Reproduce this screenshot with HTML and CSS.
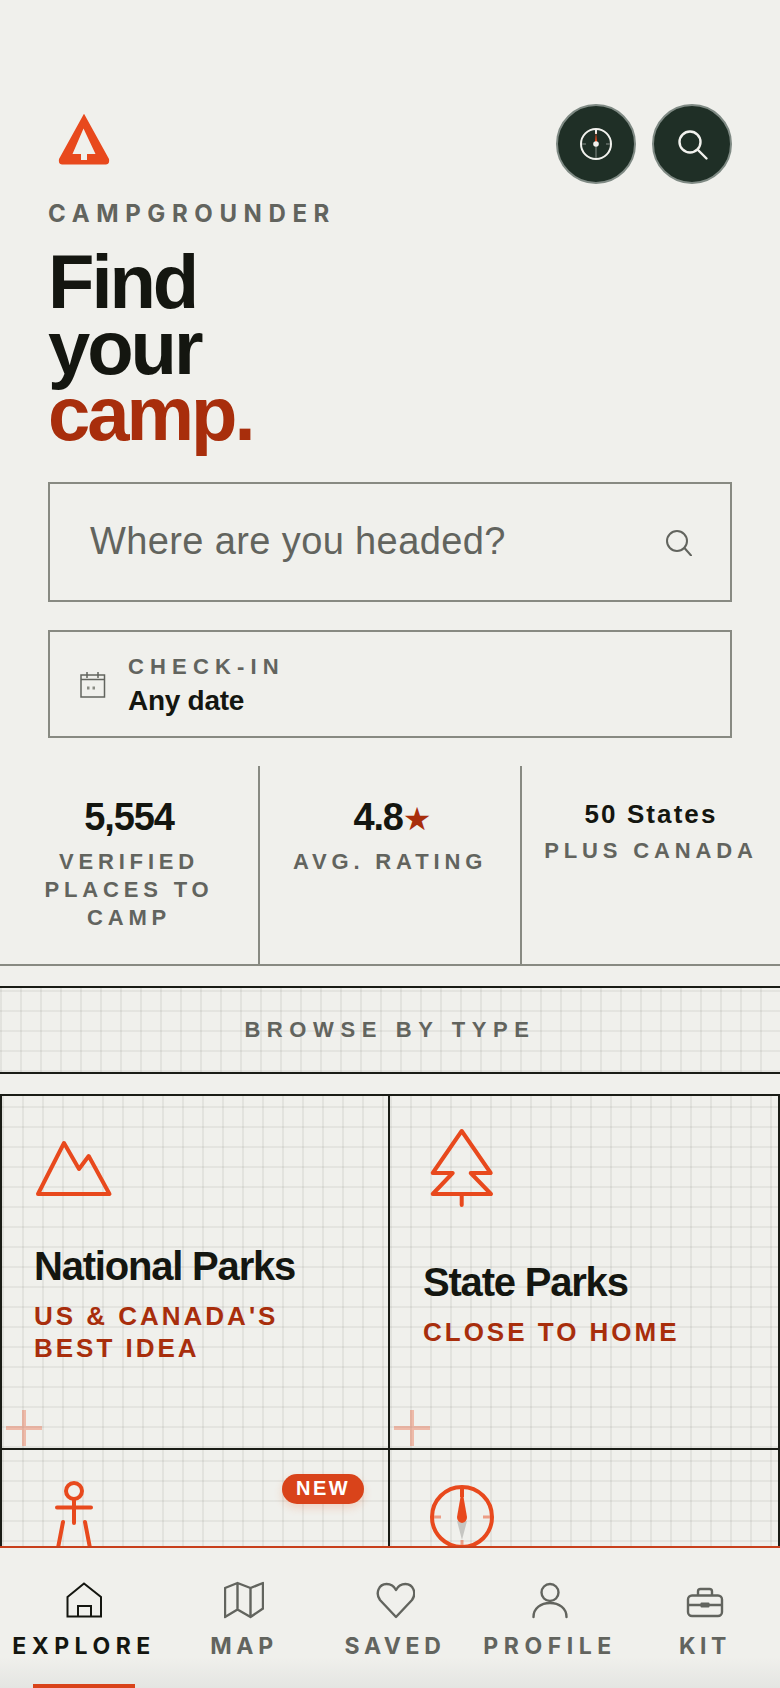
FILE: index.html
```html
<!DOCTYPE html>
<html lang="en">
<head>
<meta charset="utf-8">
<title>Campgrounder</title>
<link rel="stylesheet" href="styles.css">
</head>
<body>
<div class="app">
  <main class="main">
    <header class="hero">
      <div class="top-row">
        <svg class="logo" width="72" height="72" viewBox="0 0 72 72"><path class="logo-shape" fill-rule="evenodd" d="M36 6 Q36.500 6 37 7.500 L61 51 Q62 56 58 56.500 L14 56.500 Q10 56 11 51 L35 7.500 Q35.500 6 36 6 Z M35.500 20.500 L24.500 46 L33 46 L33 52 L39 52 L39 46 L47.500 46 Z"/></svg>
        <div class="round-btns">
          <button class="round-btn" aria-label="Compass">
            <svg width="40" height="40" viewBox="0 0 40 40" fill="none">
              <circle cx="20" cy="20" r="15" stroke="#f2f2ee" stroke-width="2"/>
              <path d="M20 5V10" stroke="#f2f2ee" stroke-width="2"/>
              <path d="M20 21V34M6 20H10M30 20H34" stroke="#66706a" stroke-width="1.500"/>
              <path d="M18.800 19 L20 8 L21.200 19 Z" fill="#e8491d"/>
              <circle cx="20" cy="20" r="2.800" fill="#f2f2ee"/>
            </svg>
          </button>
          <button class="round-btn" aria-label="Search">
            <svg width="40" height="40" viewBox="0 0 40 40" fill="none" stroke="#f2f2ee" stroke-width="2.400" stroke-linecap="round">
              <circle cx="18" cy="18" r="10.500"/>
              <path d="M26 26L34.500 34.500"/>
            </svg>
          </button>
        </div>
      </div>
      <div class="brand">CAMPGROUNDER</div>
      <h1 class="headline">Find<br>your<br><span class="accent">camp.</span></h1>
      <div class="search-box">
        <span class="placeholder">Where are you headed?</span>
        <svg width="28" height="28" viewBox="0 0 28 28" fill="none" stroke="#62645e" stroke-width="2" stroke-linecap="round">
          <circle cx="13" cy="13" r="10"/>
          <path d="M20.500 20L27 27.500"/>
        </svg>
      </div>
      <div class="date-box">
        <svg width="26" height="28" viewBox="0 0 26 28" fill="none" stroke="#62645e" stroke-width="1.500">
          <rect x="1" y="5" width="23.500" height="22"/>
          <path d="M1 9.500H24.500M7 2V8M18 2V8"/>
          <path d="M7 18H9.500M12.500 18H15" stroke="#8a8c84" stroke-width="3"/>
        </svg>
        <div class="date-text">
          <div class="date-label">CHECK-IN</div>
          <div class="date-value">Any date</div>
        </div>
      </div>
    </header>

    <section class="stats">
      <div class="stat">
        <div class="stat-value">5,554</div>
        <div class="stat-label">VERIFIED PLACES TO CAMP</div>
      </div>
      <div class="stat">
        <div class="stat-value stat-value-star">4.8<span class="star">★</span></div>
        <div class="stat-label">AVG. RATING</div>
      </div>
      <div class="stat">
        <div class="stat-value-small">50 States</div>
        <div class="stat-label stat-label-tight">PLUS CANADA</div>
      </div>
    </section>

    <div class="browse grid-bg">BROWSE BY TYPE</div>

    <section class="cards">
      <article class="card grid-bg">
        <svg class="card-icon" width="80" height="122" viewBox="0 0 80 122" fill="none" stroke="#e8491d" stroke-width="4" stroke-linecap="round" stroke-linejoin="round">
          <path d="M4 72 L30 21 L45 47 L54.700 34 L75.500 72 Z"/>
        </svg>
        <h2 class="card-title">National Parks</h2>
        <p class="card-sub">US &amp; CANADA'S BEST IDEA</p>
        <svg class="plus" width="36" height="36" viewBox="0 0 36 36"><path d="M0 18H36M18 0V36"/></svg>
      </article>
      <article class="card grid-bg">
        <svg class="card-icon" width="80" height="122" viewBox="0 0 80 122" fill="none" stroke="#e8491d" stroke-width="4" stroke-linecap="round" stroke-linejoin="round">
          <path d="M38.700 -7 L67.700 35 H47.700 L68 56 H9.700 L29.700 35 H9.700 Z M38.700 56 V67"/>
        </svg>
        <h2 class="card-title">State Parks</h2>
        <p class="card-sub">CLOSE TO HOME</p>
        <svg class="plus" width="36" height="36" viewBox="0 0 36 36"><path d="M0 18H36M18 0V36"/></svg>
      </article>
      <article class="card grid-bg">
        <span class="badge">NEW</span>
        <svg class="card-icon-low" width="80" height="120" viewBox="0 0 80 120" fill="none" stroke="#e8491d" stroke-width="4" stroke-linecap="round">
          <circle cx="40" cy="11" r="8"/>
          <path d="M40 19V43M23 27.500H57M29 42L24 68M51 42L56 68"/>
        </svg>
      </article>
      <article class="card grid-bg">
        <svg class="card-icon-low" width="80" height="120" viewBox="0 0 80 120" fill="none">
          <circle cx="40" cy="37" r="30" stroke="#e8491d" stroke-width="4"/>
          <path d="M40 7V17" stroke="#e8491d" stroke-width="4"/>
          <path d="M11 37H19M61 37H69M40 60V68" stroke="#e8491d" stroke-opacity="0.5" stroke-width="3"/>
          <path d="M35 41 L40 60 L45 41 Z" fill="#c6c6c2"/>
          <path d="M38.500 17 L41.500 17 L45 37 Q45 42 40 43 Q35 42 35 37 Z" fill="#e8491d"/>
        </svg>
      </article>
    </section>
  </main>

  <nav class="nav">
    <a class="nav-item nav-item-active">
      <svg width="40" height="40" viewBox="0 0 40 40" fill="none" stroke="#141610" stroke-width="2"><path d="M3.500 17 L20 3.500 L37 17 V36.500 H3.500 Z M14 36.500 V26 H27 V36.500"/></svg>
      <span class="nav-label nav-label-wide">EXPLORE</span>
      <span class="nav-bar"></span>
    </a>
    <a class="nav-item">
      <svg width="40" height="40" viewBox="0 0 40 40" fill="none" stroke="#62645e" stroke-width="2.400" stroke-linejoin="round"><path d="M1 8 L13.500 3 L26.500 8 L39 3 V28.500 L26.500 37 L13.500 29.500 L1 37 Z M13.500 3 V29.500 M26.500 8 V37"/></svg>
      <span class="nav-label">MAP</span>
    </a>
    <a class="nav-item">
      <svg width="40" height="40" viewBox="0 0 40 40" fill="none" stroke="#62645e" stroke-width="2.400" stroke-linejoin="round"><path d="M21 37 L5 20 C0 13 4 4 11.500 4 C16 4 19.500 7 21 10 C22.500 7 26 4 30.500 4 C38 4 42 13 37 20 Z"/></svg>
      <span class="nav-label">SAVED</span>
    </a>
    <a class="nav-item">
      <svg width="40" height="40" viewBox="0 0 40 40" fill="none" stroke="#62645e" stroke-width="2.400" stroke-linecap="round"><circle cx="20" cy="12.500" r="8.500"/><path d="M3.500 37 C3.500 28 11 23 20 23 C29 23 36.500 28 36.500 37"/></svg>
      <span class="nav-label nav-label-wide">PROFILE</span>
    </a>
    <a class="nav-item">
      <svg width="40" height="40" viewBox="0 0 40 40" fill="none" stroke="#62645e" stroke-width="2.400"><rect x="3" y="15.500" width="34" height="20.500" rx="4"/><path d="M13 15 V11.500 Q13 9 15.500 9 H24.500 Q27 9 27 11.500 V15 M3 25 H37"/><rect x="15.500" y="22.500" width="9" height="5" rx="1" fill="#62645e" stroke="none"/></svg>
      <span class="nav-label">KIT</span>
    </a>
  </nav>
</div>
</body>
</html>
```
FILE: styles.css
```css
* { box-sizing: border-box; }
html, body { margin: 0; padding: 0; }
body {
  background: #f0f0ec;
  color: #141610;
  font-family: "Liberation Sans", Arial, sans-serif;
}
.app {
  width: 780px;
  height: 1688px;
  display: flex;
  flex-direction: column;
  overflow: hidden;
}
.main {
  flex: 1;
  min-height: 0;
  overflow: hidden;
}
.hero { padding: 104px 48px 0; }
.top-row {
  display: flex;
  justify-content: space-between;
  align-items: center;
  height: 80px;
}
.logo-shape { fill: #e8491d; }
.round-btns { display: flex; gap: 16px; }
.round-btn {
  width: 80px;
  height: 80px;
  padding: 0;
  border: 2px solid #7f8a84;
  border-radius: 50%;
  background: #1f2f26;
  display: flex;
  align-items: center;
  justify-content: center;
}
.brand {
  margin-top: 15px;
  font-family: Inter, "Liberation Sans", sans-serif;
  font-size: 24px;
  font-weight: 700;
  line-height: 30px;
  letter-spacing: 0.275em;
  color: #62645e;
}
.headline {
  margin: 20px 0 0;
  font-size: 76px;
  font-weight: 700;
  line-height: 66px;
  letter-spacing: -0.04em;
}
.accent { color: #a82e0c; }
.search-box {
  margin-top: 35px;
  height: 120px;
  border: 2px solid #888a82;
  padding: 0 38px 0 40px;
  display: flex;
  align-items: center;
  justify-content: space-between;
}
.placeholder {
  font-size: 38px;
  letter-spacing: 0.01em;
  color: #62645e;
  position: relative;
  top: -1px;
}
.date-box {
  margin-top: 28px;
  height: 108px;
  border: 2px solid #888a82;
  padding: 0 30px;
  display: flex;
  align-items: center;
  gap: 22px;
}
.date-text { padding-top: 4px; }
.date-label {
  font-size: 22px;
  font-weight: 700;
  line-height: 28px;
  letter-spacing: 0.28em;
  color: #62645e;
}
.date-value {
  margin-top: 2px;
  font-size: 28px;
  font-weight: 700;
  line-height: 36px;
  letter-spacing: -0.01em;
}
.stats {
  margin-top: 28px;
  height: 200px;
  display: grid;
  grid-template-columns: 260px 262px 258px;
  border-bottom: 2px solid #888a82;
}
.stat {
  padding: 28px 24px 0;
  text-align: center;
  border-right: 2px solid #888a82;
}
.stat:last-child { border-right: none; padding: 28px 0 0; }
.stat-value {
  font-size: 38px;
  font-weight: 700;
  line-height: 46px;
  letter-spacing: -0.03em;
}
.stat-value-star { padding-left: 5px; }
.star {
  font-family: "DejaVu Sans", sans-serif;
  font-size: 32px;
  line-height: 30px;
  letter-spacing: 0;
  color: #a82e0c;
}
.stat-value-small {
  font-size: 26px;
  font-weight: 700;
  line-height: 40px;
  letter-spacing: 0.08em;
}
.stat-label {
  margin-top: 8px;
  font-size: 22px;
  font-weight: 700;
  line-height: 28px;
  letter-spacing: 0.22em;
  color: #62645e;
}
.stat-label-tight { margin-top: 3px; }
.grid-bg {
  background-image:
    linear-gradient(to right, rgba(60, 62, 54, 0.075) 2px, transparent 2px),
    linear-gradient(to bottom, rgba(60, 62, 54, 0.065) 2px, transparent 2px);
  background-size: 20px 20px;
  background-position: 0 2px, 0 2px;
}
.browse {
  margin-top: 20px;
  height: 88px;
  border-top: 2px solid #1a1c16;
  border-bottom: 2px solid #1a1c16;
  display: flex;
  align-items: center;
  justify-content: center;
  font-size: 22px;
  font-weight: 700;
  letter-spacing: 0.3em;
  color: #62645e;
}
.cards {
  margin-top: 20px;
  display: grid;
  grid-template-columns: 390px 390px;
  grid-auto-rows: 354px;
  border-top: 2px solid #1a1c16;
}
.card {
  position: relative;
  display: flex;
  flex-direction: column;
  justify-content: center;
  padding: 0 32px 58px;
  border-right: 2px solid #1a1c16;
  border-bottom: 2px solid #1a1c16;
  background-position: 0 10px, 0 10px;
}
.card:nth-child(2n+1) { border-left: 2px solid #1a1c16; }
.card:nth-child(2n) { padding-left: 33px; }
.card-icon { overflow: visible; display: block; }
.card-icon-low { display: block; overflow: visible; position: absolute; top: 30px; left: 32px; }
.card-title {
  margin: 0;
  font-size: 40px;
  font-weight: 700;
  line-height: 44px;
  letter-spacing: -0.03em;
}
.card-sub {
  margin: 12px 0 0;
  font-size: 26px;
  font-weight: 700;
  line-height: 32.500px;
  letter-spacing: 0.115em;
  color: #a82e0c;
}
.plus {
  position: absolute;
  left: 4px;
  bottom: 2px;
  stroke: #e8491d;
  stroke-opacity: 0.32;
  stroke-width: 4;
}
.badge {
  position: absolute;
  top: 24px;
  right: 24px;
  width: 82px;
  height: 30px;
  border-radius: 15px;
  background: #d9431a;
  color: #fff;
  font-size: 20px;
  font-weight: 700;
  line-height: 28px;
  letter-spacing: 0.12em;
  text-align: center;
  box-shadow: 0 4px 8px rgba(240, 100, 40, 0.2);
}
.nav {
  height: 142px;
  flex: none;
  display: grid;
  grid-template-columns: 168px 152px 150px 160px 150px;
  border-top: 2px solid #c8401c;
  background: linear-gradient(to bottom, #f0f0ec 78%, #e4e5e2 100%);
  position: relative;
}
.nav-item {
  display: flex;
  flex-direction: column;
  align-items: center;
  padding-top: 32px;
  color: #62645e;
}
.nav-item-active { color: #141610; }
.nav-label {
  margin-top: 12px;
  font-family: Inter, "Liberation Sans", sans-serif;
  font-size: 23px;
  font-weight: 700;
  line-height: 28px;
  letter-spacing: 0.2em;
}
.nav-label-wide { letter-spacing: 0.24em; }
.nav-bar {
  margin-top: auto;
  width: 102px;
  height: 4px;
  background: #d9431a;
}
```
